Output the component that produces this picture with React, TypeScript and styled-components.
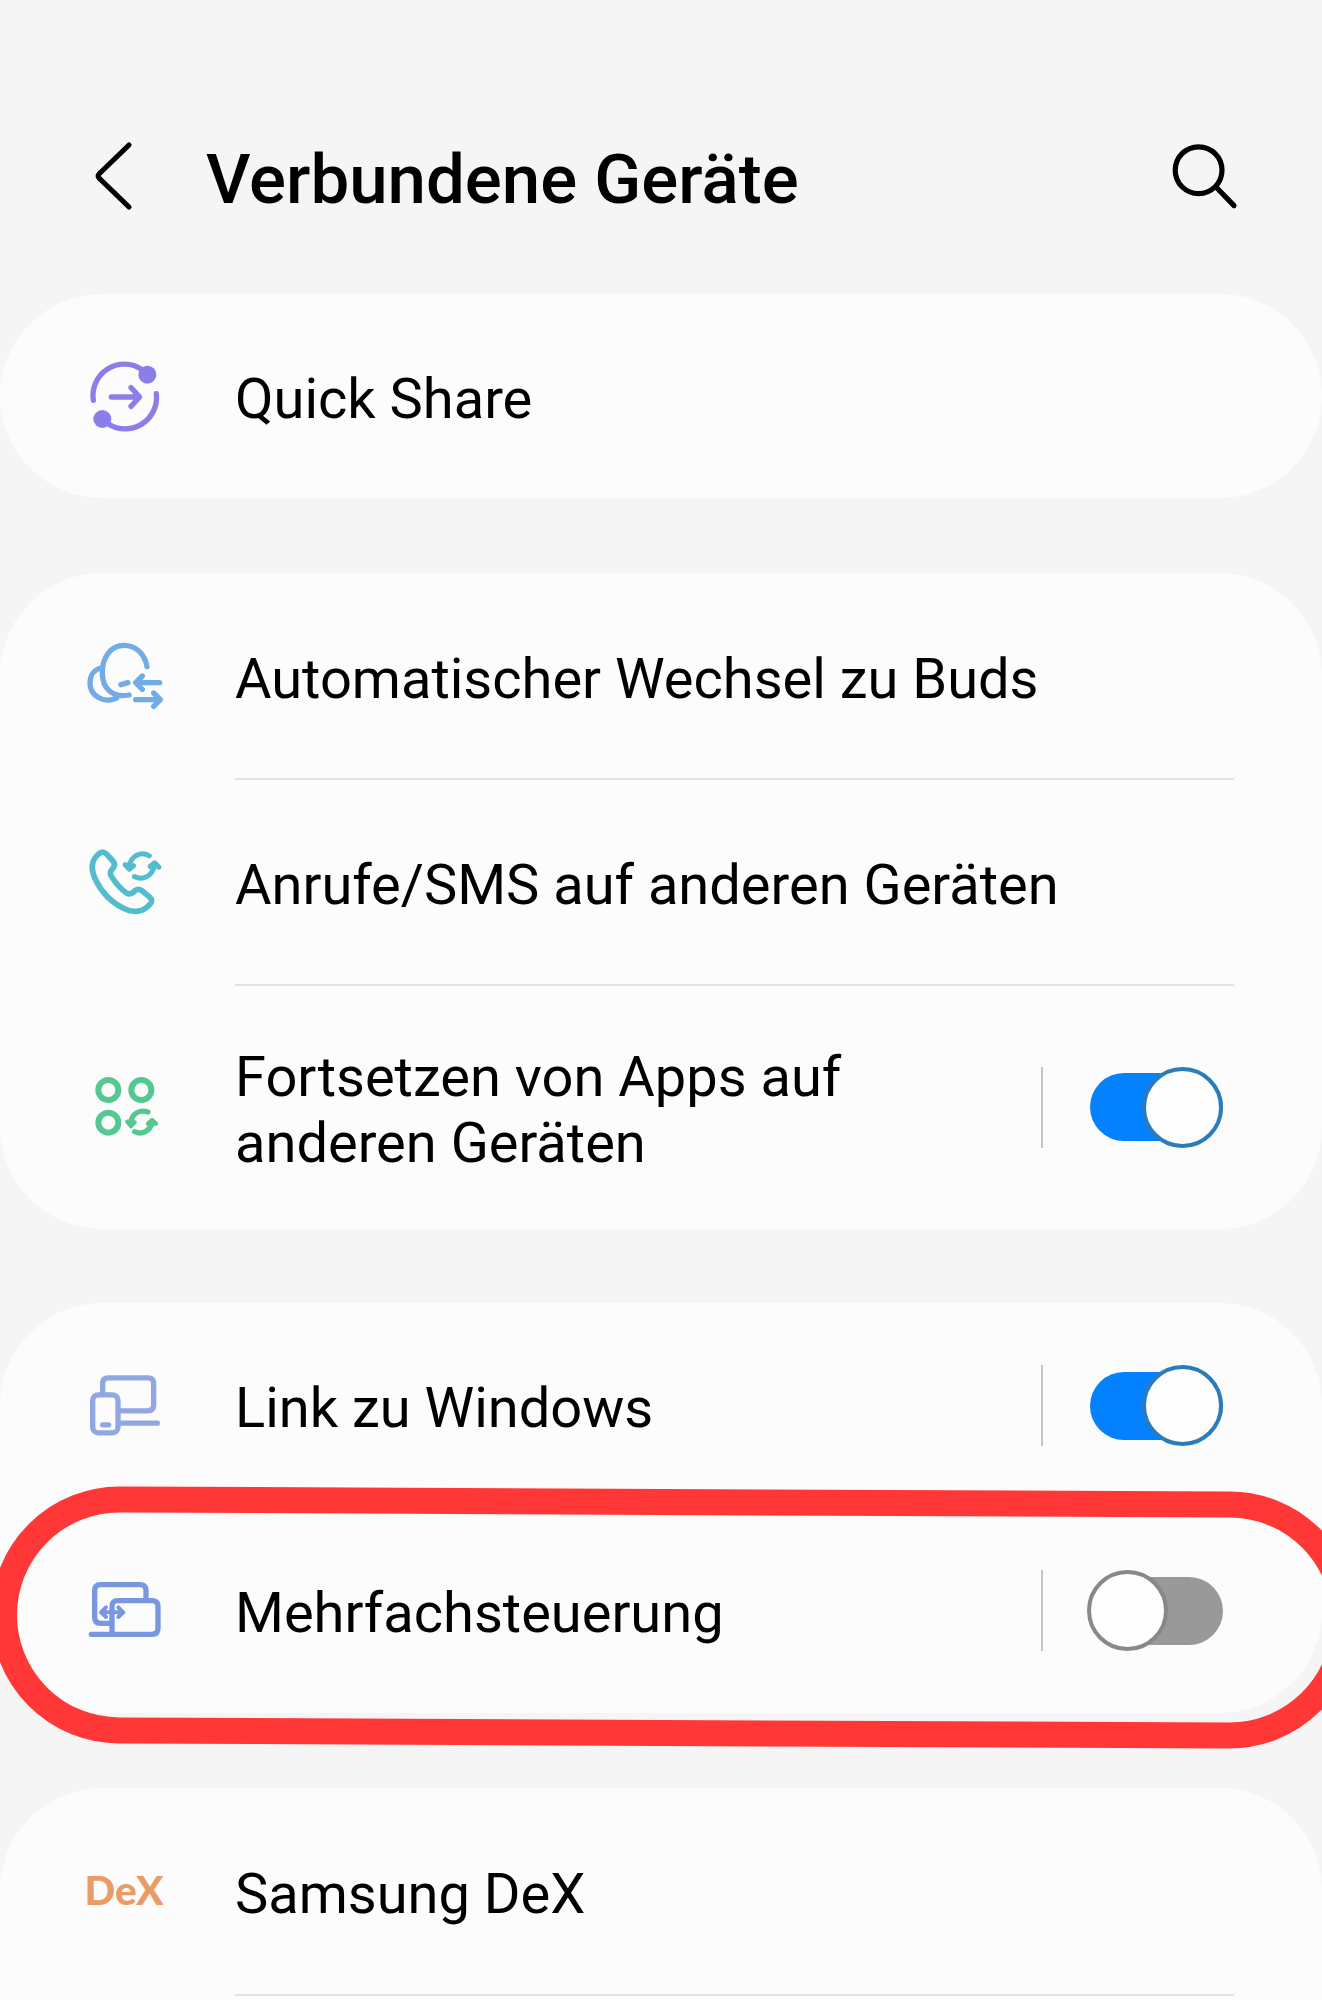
import React from "react";
import styled, { createGlobalStyle } from "styled-components";

interface IRow {
    title: string;
    icon: React.ReactNode;
    height?: number;
    toggle?: boolean;
    highlighted?: boolean;
}

interface IOn {
    on: boolean;
}

const QuickShareIcon = () => (
    <Icon viewBox="0 2 330 330" color="#8b7ee8">
        <path d="M70 180 A94 94 0 0 1 216 88" />
        <path d="M259 160 A94 94 0 0 1 114 250" />
        <circle cx="232" cy="103" r="27" fill="currentColor" stroke="none" />
        <circle cx="97" cy="236" r="27" fill="currentColor" stroke="none" />
        <path d="M124 170 H205 M183 142 L209 170 L183 198" />
    </Icon>
);

const BudsIcon = () => (
    <Icon viewBox="0 3 330 330" color="#72ace6">
        <path d="M231 140 C224 101 197 76 162 76 C122 76 97 112 97 158 C97 206 128 235 177 225" />
        <path d="M94 144 C72 148 60 167 60 190 C60 227 101 252 140 234" />
        <path d="M153 194 L174 188" />
        <path d="M269 188 H200 M217 168 L197 188 L217 208" />
        <path d="M197 239 H268 M251 219 L271 239 L251 259" />
    </Icon>
);

const CallsIcon = () => (
    <Icon viewBox="0 -7.5 330 330" color="#53bdcd">
        <path
            strokeWidth="17"
            d="M84 72 Q97 58 110 71 L130 93 Q138 103 128 114 Q117 125 124 137 Q142 167 166 185 Q177 195 189 186 Q203 171 215 180 L239 200 Q251 211 239 222 C221 244 190 249 162 234 C125 216 94 184 76 146 C62 116 63 91 84 72 Z"
        />
        <path strokeWidth="15" d="M238 76 C213 61 182 76 178 108 M165 103 L178 116 L191 106 Z" />
        <path strokeWidth="15" d="M193 138 C218 152 247 136 254 104 M240 108 L254 97 L267 110" />
    </Icon>
);

const AppsIcon = () => (
    <Icon viewBox="-30 -24 330 330" color="#55c892">
        <g strokeWidth="18">
            <circle cx="85" cy="90" r="30" />
            <circle cx="184" cy="90" r="30" />
            <circle cx="85" cy="188" r="30" />
        </g>
        <path d="M204 156 C179 148 157 160 153 185" />
        <path d="M164 215 C186 226 211 212 216 188" />
        <path d="M142 185 L153 198 L164 187 Z M204 191 L216 180 L228 191 Z" fill="currentColor" strokeWidth="13" />
    </Icon>
);

const LinkIcon = () => (
    <Icon viewBox="-15 -28.5 330 330" color="#90a7e2">
        <path d="M83 96 V69 Q83 52 100 52 H218 Q236 52 236 69 V133 Q236 151 218 151 H136" />
        <rect x="53" y="103" width="76" height="114" rx="17" />
        <path d="M83 193 H101 M136 188 H247" />
    </Icon>
);

const MultiControlIcon = () => (
    <Icon viewBox="-15 -27 330 330" color="#7897e0">
        <path d="M105 175 H77 Q59 175 59 157 V77 Q59 59 77 59 H195 Q213 59 213 77 V100" />
        <path d="M49 208 H231 Q249 208 249 190 V125 Q249 107 231 107 H128 Q111 107 111 125 V208" />
        <path strokeWidth="12" d="M80 142 H143 M93 127 L78 142 L93 156 M130 127 L145 142 L130 156" />
    </Icon>
);

const cards: IRow[][] = [
    [{ title: "Quick Share", icon: <QuickShareIcon />, height: 204 }],
    [
        { title: "Automatischer Wechsel zu Buds", icon: <BudsIcon />, height: 207 },
        { title: "Anrufe/SMS auf anderen Geräten", icon: <CallsIcon /> },
        { title: "Fortsetzen von Apps auf anderen Geräten", icon: <AppsIcon />, height: 243, toggle: true },
    ],
    [
        { title: "Link zu Windows", icon: <LinkIcon />, height: 205, toggle: true },
        { title: "Mehrfachsteuerung", icon: <MultiControlIcon />, height: 205, toggle: false, highlighted: true },
    ],
    [
        { title: "Samsung DeX", icon: "DeX", height: 208 },
        { title: "", icon: null },
    ],
];

const App: React.FC = () => (
    <>
        <GlobalStyle />
        <Screen>
            <Header>
                <BackButton aria-label="Zurück">
                    <svg width="50" height="80" viewBox="90 136 50 80">
                        <path d="M129 145 L99.5 173.5 Q97 176 99.5 178.5 L129 207" />
                    </svg>
                </BackButton>
                <PageTitle>Verbundene Geräte</PageTitle>
                <SearchButton aria-label="Suchen">
                    <svg width="80" height="80" viewBox="1165 136 80 80">
                        <circle cx="1198.6" cy="170.2" r="23.4" />
                        <path d="M1216 187 L1234 205.6" />
                    </svg>
                </SearchButton>
            </Header>
            <List>
                {cards.map((rows, index) => (
                    <Card key={"Card_" + index}>
                        {rows.map((row, i) => (
                            <Row key={"Row_" + i} height={row.height}>
                                <IconSlot>{row.icon}</IconSlot>
                                <Content divided={i < rows.length - 1}>
                                    <Label>{row.title}</Label>
                                    {row.toggle !== undefined && (
                                        <ToggleArea>
                                            <Toggle on={row.toggle}>
                                                <Track on={row.toggle} />
                                                <Knob on={row.toggle} />
                                            </Toggle>
                                        </ToggleArea>
                                    )}
                                </Content>
                                {row.highlighted && <Highlight />}
                            </Row>
                        ))}
                    </Card>
                ))}
            </List>
        </Screen>
    </>
);

const GlobalStyle = createGlobalStyle`
    * {
        box-sizing: border-box;
    }
    body {
        margin: 0;
        background: #f5f5f5;
        color: #000;
        font-family: Roboto, "Liberation Sans", sans-serif;
    }
`;

const Screen = styled.main`
    width: 1322px;
    height: 2000px;
    overflow: hidden;
    background: #f5f5f5;
`;

const Header = styled.header`
    display: flex;
    align-items: center;
    height: 294px;
    padding: 64px 77px 0 90px;
`;

const HeaderButton = styled.button`
    display: flex;
    padding: 0;
    border: none;
    background: none;
    margin-bottom: 6px;

    svg {
        fill: none;
        stroke: #000;
        stroke-width: 5.2;
        stroke-linecap: round;
    }
`;

const BackButton = styled(HeaderButton)`
    margin-right: 66px;
`;

const SearchButton = styled(HeaderButton)`
    margin-left: auto;
`;

const PageTitle = styled.h1`
    margin: 2px 0 0;
    font-size: 69px;
    font-weight: 500;
    line-height: 82px;
    white-space: nowrap;
`;

const List = styled.div`
    display: flex;
    flex-direction: column;
    gap: 74.5px;
`;

const Card = styled.section`
    flex: none;
    border-radius: 102px;
    background: #fcfcfc;
`;

const Row = styled.div<{ height?: number }>`
    position: relative;
    display: flex;
    height: ${(props) => props.height || 206}px;
    padding: 0 88px 0 70px;
`;

const IconSlot = styled.div`
    display: flex;
    align-items: center;
    justify-content: center;
    width: 110px;
    margin-right: 55px;
    padding: 0 2px 5px 0;
    color: #e99c68;
    font-family: Lato, sans-serif;
    font-size: 40.5px;
    font-weight: 900;

    &:has(svg) {
        padding: 0;
    }
`;

const Icon = styled.svg`
    width: 110px;
    height: 110px;
    fill: none;
    stroke: currentColor;
    stroke-width: 16;
    stroke-linecap: round;
    stroke-linejoin: round;
`;

const Content = styled.div<{ divided: boolean }>`
    flex: 1;
    display: flex;
    align-items: center;
    justify-content: space-between;
    padding-top: ${(props) => (props.divided ? "2px" : "0")};
    border-bottom: ${(props) => (props.divided ? "2px solid #e2e2e2" : "none")};
`;

const Label = styled.span`
    padding-top: 5px;
    max-width: 830px;
    font-size: 56px;
    line-height: 66px;
`;

const ToggleArea = styled.div`
    display: flex;
    flex: none;
    align-items: center;
    height: 81px;
    margin-left: 30px;
    padding: 0 11px 0 44px;
    border-left: 2px solid #c4c4c4;
`;

const Toggle = styled.div<IOn>`
    display: flex;
    align-items: center;
    justify-content: ${(props) => (props.on ? "flex-end" : "flex-start")};
    position: relative;
    width: 136px;
    height: 81px;
`;

const Track = styled.div<IOn>`
    position: absolute;
    top: 6.5px;
    left: 3px;
    width: 133px;
    height: 68px;
    border-radius: 34px;
    background: ${(props) => (props.on ? "#0381fe" : "#999")};
`;

const Knob = styled.div<IOn>`
    position: relative;
    width: 81px;
    height: 81px;
    border: 4px solid ${(props) => (props.on ? "#2a7cba" : "#888")};
    border-radius: 50%;
    background: #fdfdfd;
`;

// marker drawn around a row, runs over the card edges
const Highlight = styled.div`
    position: absolute;
    top: -19px;
    left: -9px;
    width: 1367px;
    height: 257px;
    border: 26px solid #ff3737;
    border-radius: 129px;
    transform: rotate(0.26deg);
    z-index: 1;
`;

export default App;
